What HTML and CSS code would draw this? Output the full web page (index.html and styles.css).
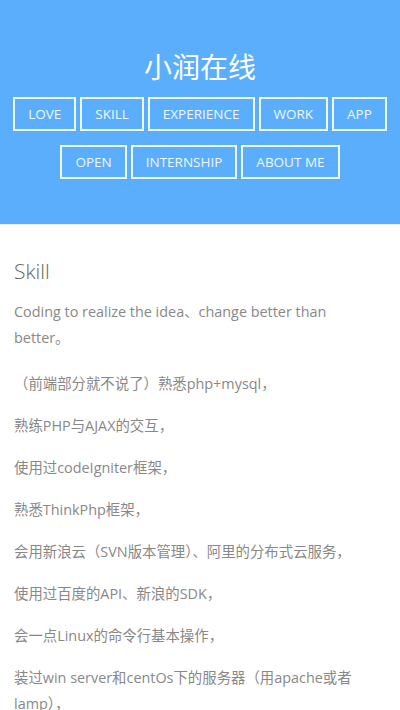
FILE: index.html
```html
<!DOCTYPE html>
<html lang="zh-CN">
<head>
<meta charset="utf-8">
<title>小润在线</title>
<link rel="stylesheet" href="styles.css">
</head>
<body>
<header class="header">
  <h1 class="site-title">小润在线</h1>
  <nav class="nav">
    <a class="nav-btn" href="#">LOVE</a>
    <a class="nav-btn" href="#">SKILL</a>
    <a class="nav-btn" href="#">EXPERIENCE</a>
    <a class="nav-btn" href="#">WORK</a>
    <a class="nav-btn" href="#">APP</a>
    <a class="nav-btn" href="#">OPEN</a>
    <a class="nav-btn" href="#">INTERNSHIP</a>
    <a class="nav-btn" href="#">ABOUT ME</a>
  </nav>
</header>
<main class="content">
  <h2 class="section-title">Skill</h2>
  <p class="lead">Coding to realize the idea、change better than better。</p>
  <p class="item">（前端部分就不说了）熟悉php+mysql，</p>
  <p class="item">熟练PHP与AJAX的交互，</p>
  <p class="item">使用过codeIgniter框架，</p>
  <p class="item">熟悉ThinkPhp框架，</p>
  <p class="item">会用新浪云（SVN版本管理）、阿里的分布式云服务，</p>
  <p class="item">使用过百度的API、新浪的SDK，</p>
  <p class="item">会一点Linux的命令行基本操作，</p>
  <p class="item">装过win server和centOs下的服务器（用apache或者lamp），</p>
</main>
</body>
</html>
```

FILE: styles.css
```css
html, body {
  margin: 0;
  padding: 0;
}
body {
  font-family: "Open Sans", "Noto Sans CJK SC", sans-serif;
  background: #ffffff;
}
.header {
  background: #5aaefc;
  height: 225px;
  box-sizing: border-box;
  padding-top: 46px;
  border-bottom: 1px solid #e6eef6;
}
.site-title {
  margin: 0;
  font-family: "Noto Sans CJK SC", sans-serif;
  font-weight: 400;
  font-size: 28px;
  line-height: 40px;
  color: #ffffff;
  text-align: center;
}
.nav {
  margin-top: 11px;
  display: flex;
  flex-wrap: wrap;
  justify-content: center;
  column-gap: 4px;
  row-gap: 14px;
  padding: 0 4px;
}
.nav-btn {
  display: block;
  height: 34px;
  box-sizing: border-box;
  line-height: 30px;
  padding: 0 13px;
  border: 2px solid rgba(255, 255, 255, 0.9);
  color: #eef6ff;
  font-size: 13.5px;
  text-decoration: none;
  text-transform: uppercase;
}
.content {
  padding: 32px 30px 0 14px;
}
.section-title {
  margin: 0;
  font-size: 21px;
  font-weight: 300;
  line-height: 28px;
  color: #666666;
}
.lead {
  margin: 14px 0 20px;
  font-size: 14.4px;
  line-height: 26px;
  color: #888888;
}
.item {
  margin: 0 0 16px;
  font-size: 14.4px;
  line-height: 26px;
  color: #888888;
}
```
